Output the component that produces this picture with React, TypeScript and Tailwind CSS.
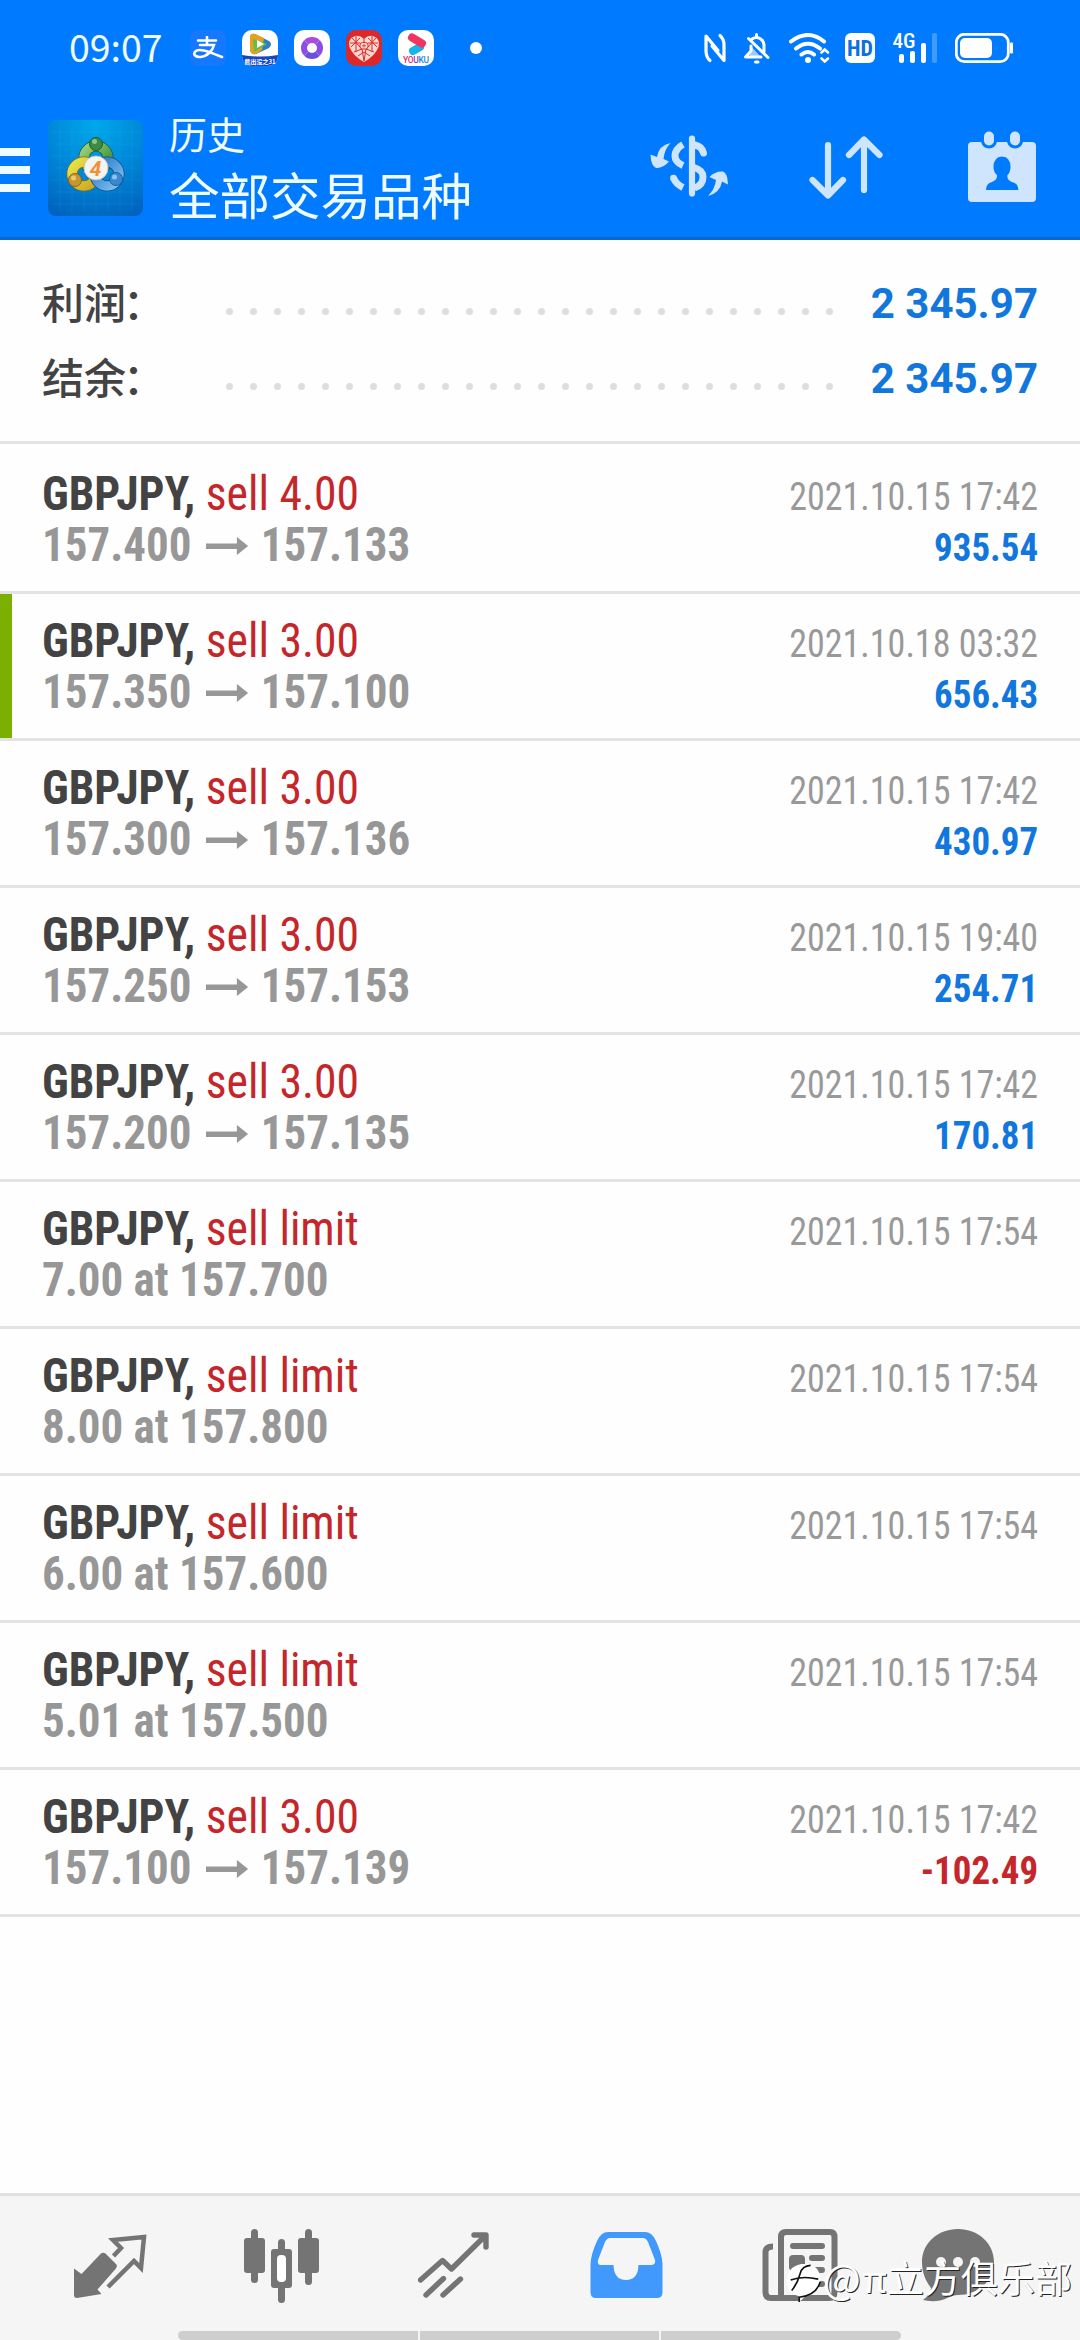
type Deal = {
  kind: string;
  from?: string;
  to?: string;
  detail?: string;
  time: string;
  profit?: string;
  loss?: boolean;
  marked?: boolean;
};

const deals: Deal[] = [
  { kind: 'sell 4.00', from: '157.400', to: '157.133', time: '2021.10.15 17:42', profit: '935.54' },
  { kind: 'sell 3.00', from: '157.350', to: '157.100', time: '2021.10.18 03:32', profit: '656.43', marked: true },
  { kind: 'sell 3.00', from: '157.300', to: '157.136', time: '2021.10.15 17:42', profit: '430.97' },
  { kind: 'sell 3.00', from: '157.250', to: '157.153', time: '2021.10.15 19:40', profit: '254.71' },
  { kind: 'sell 3.00', from: '157.200', to: '157.135', time: '2021.10.15 17:42', profit: '170.81' },
  { kind: 'sell limit', detail: '7.00 at 157.700', time: '2021.10.15 17:54' },
  { kind: 'sell limit', detail: '8.00 at 157.800', time: '2021.10.15 17:54' },
  { kind: 'sell limit', detail: '6.00 at 157.600', time: '2021.10.15 17:54' },
  { kind: 'sell limit', detail: '5.01 at 157.500', time: '2021.10.15 17:54' },
  { kind: 'sell 3.00', from: '157.100', to: '157.139', time: '2021.10.15 17:42', profit: '-102.49', loss: true },
];

function AppBadges() {
  return (
    <div className="flex items-center gap-[16px]">
      <div className="flex h-9 w-9 items-center justify-center rounded-lg bg-[#1677ff]">
        <svg width="32" height="24" viewBox="0 0 32 24" fill="none" stroke="#fff" strokeWidth="2.6" strokeLinecap="round">
          <path d="M6 4.5H24M15 1V9M8 9H22C20.5 15 15 20.500 8.500 21C3.500 21.300 1 18.500 3 15.800C6.500 11.500 15 15 30 21" />
        </svg>
      </div>
      <svg width="36" height="36" viewBox="0 0 36 36">
        <defs><clipPath id="tv"><rect width="36" height="36" rx="10" /></clipPath></defs>
        <g clipPath="url(#tv)">
          <rect width="36" height="36" fill="#fff" />
          <path d="M8 8Q8 3 13 4L27 11Q31 14 27 18L14 24Q9 25 8 20Z" fill="#2f80c0" />
          <path d="M8 8Q8 3 13 4L22 8 20 20 14 24Q9 25 8 20Z" fill="#e8a020" />
          <path d="M11 9 25 14 12 22Z" fill="#5cc04a" />
          <path d="M15 10 22 14 15 18Z" fill="#fff" />
          <path d="M0 25Q18 28 36 25V36H0Z" fill="#1347c0" />
        </g>
        <text x="18" y="33.500" textAnchor="middle" fill="#fff" fontSize="6" fontWeight="700" fontFamily="Noto Sans CJK SC, sans-serif">熊出没之31</text>
      </svg>
      <div className="flex h-9 w-9 items-center justify-center rounded-[10px] bg-white">
        <div className="h-[22px] w-[22px] rounded-full border-[6px] border-t-[#a84be0] border-r-[#8a4fe0] border-b-[#6a50dc] border-l-[#8a4fe0]" />
      </div>
      <svg width="36" height="36" viewBox="0 0 36 36">
        <rect width="36" height="36" rx="10" fill="#dc2828" />
        <path d="M18 9Q22 5 27 6Q35 9 32.500 17Q29 26 18 32Q7 26 3.500 17Q1 9 9 6Q14 5 18 9Z" fill="#f9d8d0" />
        <path d="M6 8 14 17M14 8 5 17M30 8 22 17M22 8 31 17M8 22 16 19 18 31M28 22 20 19 18 31M12 26 18 22 24 26M10 6V22M26 6V22M4 13H14M22 13H32M18 9V13" fill="none" stroke="#dc2828" strokeWidth="1" />
        <rect x="14" y="12.500" width="8" height="6.500" rx="2.500" fill="#f9d8d0" stroke="#dc2828" />
        <path d="M16 15.800H20M18 14V17.500" stroke="#dc2828" strokeWidth=".8" />
      </svg>
      <svg width="36" height="36" viewBox="0 0 36 36">
        <rect width="36" height="36" rx="10" fill="#fff" />
        <path d="M15 21 22 17" stroke="#19b3ea" strokeWidth="8" strokeLinecap="round" />
        <path d="M14 7.500 24 13.500" stroke="#f0355f" strokeWidth="8" strokeLinecap="round" />
        <text x="5" y="33" fontSize="8.5" textLength="26" fontFamily="Roboto, sans-serif" fontWeight="500"><tspan fill="#e02a6a">YO</tspan><tspan fill="#8040b0">U</tspan><tspan fill="#1c8ad8">KU</tspan></text>
      </svg>
    </div>
  );
}

function StatusBar() {
  return (
    <div className="flex h-[96px] items-center pl-[69px]">
      <div className="mb-[5px] w-[121px] font-['Noto_Sans_CJK_SC','Roboto',sans-serif] text-[37.500px] leading-none">09:07</div>
      <AppBadges />
      <div className="ml-[36px] h-3 w-3 rounded-full bg-white" />
      <div className="ml-[222px] flex items-center">
        <svg width="22" height="30" viewBox="702 33 22 30" fill="none" stroke="#fff" strokeWidth="3.2" strokeLinejoin="round" strokeLinecap="round">
          <path d="M708 60.500Q704 57 704 51V36L716 50.500M718 35.500Q722 39 722 45V60.500L710 46" />
        </svg>
        <svg className="ml-[17px]" width="27" height="31" viewBox="741 32 27 31" fill="none" stroke="#fff" strokeWidth="3" strokeLinecap="round" strokeLinejoin="round">
          <path d="M754.500 33.500V36M750 38Q754 35.500 758 37.500Q762 40 762 45V51M746.500 37.500 766 56.500M749 45V50L743.500 56H759M753.500 61H756" />
          <path d="M748 44 758 55H748Z" fill="#fff" stroke="none" opacity=".6" />
        </svg>
        <svg className="ml-[19px]" width="41" height="31" viewBox="787 33 41 31" fill="none" stroke="#fff" strokeWidth="4" strokeLinecap="round">
          <path d="M789 41.500Q806 28.500 822 41.500M794 48.500Q806 39 818 48.500M799.500 54.500Q806 49.500 812 54.500" />
          <circle cx="806" cy="60" r="3" fill="#fff" stroke="none" />
          <path d="M819.500 52.500 822.700 49.500 826 52.500M819.500 58.500 822.700 61.500 826 58.500" strokeWidth="2.600" />
        </svg>
        <div className="ml-[15px] flex h-[30px] w-[30px] items-center justify-center rounded-[6px] bg-white font-['Roboto_Condensed','Roboto',sans-serif] text-[22px] font-bold text-[#0d6fe0]">HD</div>
        <svg className="ml-[18px] overflow-visible" width="44" height="31" viewBox="891 33 44 31">
          <text x="890.500" y="48" fontSize="20" fontWeight="500" fill="#fff" textLength="23" lengthAdjust="spacingAndGlyphs" fontFamily="Roboto Condensed, Roboto, sans-serif">4G</text>
          <rect x="897" y="54" width="5" height="9" rx="2" fill="#fff" />
          <rect x="908" y="51" width="5" height="12" rx="2" fill="#fff" />
          <rect x="919" y="43" width="5" height="20" rx="2" fill="#fff" />
          <rect x="930" y="33" width="5" height="30" rx="2" fill="#fff" opacity=".25" />
        </svg>
        <svg className="ml-[18px]" width="59" height="31" viewBox="953 33 59 31">
          <rect x="954.300" y="34.300" width="52" height="27.400" rx="8" fill="none" stroke="#fff" strokeWidth="2.800" />
          <rect x="958" y="38" width="32" height="20" rx="5" fill="#fff" />
          <rect x="1008" y="42.500" width="3" height="11" rx="1" fill="#fff" />
        </svg>
      </div>
    </div>
  );
}

function Logo() {
  return (
    <svg className="ml-[18px] shrink-0" width="95" height="96" viewBox="0 0 95 96">
      <defs>
        <radialGradient id="bg" cx=".5" cy=".05" r="1"><stop offset="0" stopColor="#00a8ea" /><stop offset=".5" stopColor="#0088d8" /><stop offset="1" stopColor="#0064be" /></radialGradient>
        <linearGradient id="gr" x1="0" y1="0" x2="1" y2="1"><stop offset="0" stopColor="#9fcf7a" /><stop offset="1" stopColor="#2f8a2f" /></linearGradient>
        <linearGradient id="ye" x1="0" y1="0" x2="1" y2="1"><stop offset="0" stopColor="#e8e24a" /><stop offset="1" stopColor="#c9a820" /></linearGradient>
        <linearGradient id="bl" x1="0" y1="0" x2="1" y2="1"><stop offset="0" stopColor="#2a78c8" /><stop offset="1" stopColor="#7cc0ee" /></linearGradient>
      </defs>
      <rect width="95" height="96" rx="8" fill="url(#bg)" />
      <path d="M12 4V92M24 4V92M36 4V92M48 4V92M60 4V92M72 4V92M84 4V92M4 12H91M4 24H91M4 36H91M4 48H91M4 60H91M4 72H91M4 84H91" stroke="#4cc0f4" strokeOpacity=".12" />
      <g fill="none">
        <circle cx="48" cy="38" r="12" stroke="#1d5a3a" strokeWidth="11" />
        <circle cx="48" cy="38" r="12" stroke="url(#gr)" strokeWidth="9.500" />
        <circle cx="36" cy="54" r="12" stroke="#7a6a18" strokeWidth="11" />
        <circle cx="36" cy="54" r="12" stroke="url(#ye)" strokeWidth="9.500" />
        <circle cx="59" cy="54" r="12" stroke="#144a88" strokeWidth="11" />
        <circle cx="59" cy="54" r="12" stroke="url(#bl)" strokeWidth="9.500" />
      </g>
      <circle cx="48" cy="24" r="6.500" fill="#3d8a44" stroke="#1f5c38" />
      <circle cx="46.500" cy="21.500" r="2.500" fill="#8fc48a" />
      <circle cx="27" cy="60" r="6.500" fill="#c8962c" stroke="#86641c" />
      <circle cx="25.500" cy="58" r="2.500" fill="#ecc878" />
      <circle cx="68" cy="59" r="6.500" fill="#3a88d0" stroke="#1d5c9c" />
      <circle cx="66.500" cy="57" r="2.500" fill="#8cc4f0" />
      <circle cx="48" cy="48" r="12" fill="#f4f4f0" stroke="#c8c8b8" />
      <text x="47.500" y="55.500" textAnchor="middle" fontSize="21" fontStyle="italic" fontWeight="700" fill="#f09038" fontFamily="Roboto, sans-serif">4</text>
    </svg>
  );
}

function Header() {
  return (
    <header className="h-[240px] border-b-[3px] border-[#0868cc] bg-[#007aff] text-[#eefbff]">
      <StatusBar />
      <div className="flex h-[144px] items-start pt-6">
        <div className="mt-7 flex w-[30px] flex-col gap-[10px]">
          <div className="h-2 bg-[#eefbff]" />
          <div className="h-2 bg-[#eefbff]" />
          <div className="h-2 bg-[#eefbff]" />
        </div>
        <Logo />
        <div className="-mt-[10px] ml-[26px] font-['Noto_Sans_CJK_SC',sans-serif]">
          <div className="text-[38px] leading-[46px]">历史</div>
          <div className="mt-[4px] text-[50.500px] leading-[66px]">全部交易品种</div>
        </div>
        <svg className="mt-[15px] ml-auto" width="79" height="62" viewBox="651 135 79 62" fill="none" stroke="#cfe5fd" strokeWidth="6">
          <path d="M693 138.500V193.500" strokeLinecap="round" strokeWidth="6.200" />
          <path d="M684 144.500Q676 149 676 156Q676 162 684 165.500" strokeWidth="7" />
          <path d="M696 145Q703 146.500 704.500 153" strokeLinecap="round" strokeWidth="7" />
          <path d="M684 187.500Q677 184 674.500 178" strokeWidth="7" />
          <path d="M695 167.500Q704 170 704 177Q704 185 695.500 188" strokeWidth="7" />
          <circle cx="674.500" cy="178" r="3.300" fill="#cfe5fd" stroke="none" />
          <path d="M671.500 143Q660 145 658 157L651.500 154.500Q652 166 657 168Q664 168.500 670 161.500L664.500 159Q665.500 149 671.500 143Z" fill="#cfe5fd" stroke="none" />
          <path d="M709 196Q721 193 723 181.500L729 184.500Q728.500 173 724 171.500Q716 171 710.500 177L717 180Q716 189 709 196Z" fill="#cfe5fd" stroke="none" />
        </svg>
        <svg className="mt-[15px] ml-[79px]" width="76" height="66" viewBox="808 135 76 66" fill="none" stroke="#cfe5fd" strokeWidth="6.200" strokeLinecap="round" strokeLinejoin="round">
          <path d="M828 145V195M812.500 180 828 195.500 843 180M864 190V139.500M849 155 864 139.500 879.500 155" />
        </svg>
        <svg className="mt-[11px] mr-[44px] ml-[84px]" width="68" height="72" viewBox="968 131 68 72">
          <path d="M972 142H981Q983 148.500 989 148.500Q995 148.500 997 142H1007Q1009 148.500 1015 148.500Q1021 148.500 1023 142H1032Q1036 142 1036 146V198Q1036 202 1032 202H972Q968 202 968 198V146Q968 142 972 142Z" fill="#cfe5fd" />
          <rect x="984" y="131.500" width="10" height="14" rx="5" fill="#cfe5fd" />
          <rect x="1010" y="131.500" width="10" height="14" rx="5" fill="#cfe5fd" />
          <path d="M1002 156.500Q1010.500 157 1010.500 167Q1010.500 172 1007.500 175Q1006.500 180 1012 182Q1018.500 183.500 1018.500 190H986Q986 183.500 992 182Q997.500 180 997 175Q993.500 172 993.500 167Q993.500 157 1002 156.500Z" fill="#007aff" />
        </svg>
      </div>
    </header>
  );
}

function SummaryRow({ label, value }: { label: string; value: string }) {
  return (
    <div className="flex h-[75px] items-center">
      <div className="mb-[7px] w-[184px] font-['Noto_Sans_CJK_SC',sans-serif] text-[42px] font-medium text-[#434343]">
        {label}<span className="-ml-[3px]">：</span>
      </div>
      <div className="mt-[15px] flex w-[607px] justify-between">
        {Array.from({ length: 26 }, (_, i) => (
          <div key={i} className="h-[7px] w-[7px] rounded-full bg-[#dedede]" />
        ))}
      </div>
      <div className="ml-auto font-['Roboto',sans-serif] text-[42px] font-bold text-[#1177dd]">{value}</div>
    </div>
  );
}

function DealRow({ deal }: { deal: Deal }) {
  return (
    <div className="relative flex h-[147px] justify-between border-b-[3px] border-[#e3e3e3] pt-[21px] pr-[42px] pl-[42px] font-['Roboto_Condensed','Roboto',sans-serif]">
      {deal.marked && <div className="absolute top-0 left-0 h-full w-3 bg-[#7cb000]" />}
      <div className="text-[48px] leading-[51px] whitespace-nowrap">
        <div className="origin-left scale-x-[.951] text-[#c4262a]">
          <span className="font-bold text-[#434343]">GBPJPY,</span> {deal.kind}
        </div>
        <div className="flex origin-left scale-x-[.937] items-center font-bold text-[#979797]">
          {deal.detail ?? (
            <>
              {deal.from}
              <svg className="mr-[14px] ml-[15px] mt-[2px]" width="45" height="18" viewBox="0 0 45 18">
                <path d="M0 6.500H33V0L45 9 33 18V12H0Z" fill="#979797" />
              </svg>
              {deal.to}
            </>
          )}
        </div>
      </div>
      <div className="pt-[3px] text-right text-[39.500px] leading-[51px]">
        <div className="origin-right scale-x-[.911] text-[#999]">{deal.time}</div>
        <div className={deal.loss ? 'origin-right scale-x-[.935] font-bold text-[#c4262a]' : 'origin-right scale-x-[.935] font-bold text-[#1177dd]'}>{deal.profit}</div>
      </div>
    </div>
  );
}

function BottomBar() {
  return (
    <nav className="h-[147px] border-t-[3px] border-[#e0e0e0] bg-[#f5f5f5]">
      <div className="flex h-[135px] items-start px-[74px] pt-[33px] text-[#747474]">
        <svg width="73" height="74" viewBox="74 2229 73 74" fill="currentColor">
          <path d="M74 2268.500 81.500 2274 101 2253.500Q103.500 2252 106 2254L116.500 2264.500Q117.500 2267 115.500 2269L97.500 2289.500 101.500 2294 77 2298Q74 2298 74 2295Z" />
          <path d="M113.500 2256 121 2248 113 2240 144 2237 141 2268 134 2261 108 2287" fill="none" stroke="currentColor" strokeWidth="4.500" />
        </svg>
        <svg className="ml-[97px]" width="76" height="75" viewBox="244 2229 76 75" fill="currentColor">
          <rect x="244" y="2238" width="21" height="35" rx="3" /><rect x="251" y="2229" width="7" height="54" rx="3.500" />
          <rect x="298" y="2238" width="21" height="35" rx="3" /><rect x="305" y="2229" width="7" height="56" rx="3.500" />
          <rect x="278" y="2239" width="7" height="64" rx="3.500" />
          <rect x="271" y="2249" width="21" height="39" rx="3" /><rect x="277" y="2255" width="9" height="27" rx="4" fill="#fff" />
        </svg>
        <svg className="ml-[98px]" width="72" height="74" viewBox="418 2229 72 74" fill="none" stroke="currentColor" strokeWidth="5.400" strokeLinecap="round" strokeLinejoin="round">
          <path d="M420.500 2280 442.500 2260.500 451.500 2269 485 2236M474 2235H486V2247M426 2295 443.500 2278.500M443 2295 460.500 2279" />
        </svg>
        <svg className="ml-[100px]" width="73" height="74" viewBox="590 2229 73 74">
          <path fillRule="evenodd" d="M608 2232H645Q652 2232 656 2241Q662 2254 662.500 2264V2292Q662.500 2298 657 2298H596Q590.500 2298 590.500 2292V2264Q591 2254 597 2241Q601 2232 608 2232ZM610 2238Q607 2238 605 2242L598 2260Q597 2265 601 2265H613.500Q614 2280 626 2280Q638 2280 638.500 2265H651Q656 2265 655 2260L648 2242Q646 2238 643 2238Z" fill="#4199fd" />
        </svg>
        <svg className="ml-[99px]" width="76" height="74" viewBox="762 2229 76 74" fill="none" stroke="currentColor" strokeWidth="6">
          <path d="M773 2246.500Q765.500 2246.500 765.500 2252V2292Q765.500 2298 771 2298H829Q834.500 2298 834.500 2292V2237Q834.500 2232 830 2232H786Q781 2232 781 2237V2298" />
          <path d="M793 2246H822M812 2258H822M812 2270H822M793 2284H822" strokeLinecap="round" />
          <rect x="792" y="2258" width="10" height="10" rx="1" fill="currentColor" />
        </svg>
        <svg className="ml-[84px]" width="73" height="74" viewBox="922 2229 73 74">
          <path d="M958 2229C978 2229 994 2243 994 2262C994 2281 978 2295 958 2295C950 2295 948 2299 940 2300.500Q931 2302 923 2300Q931 2294 931 2288C925 2280 922 2272 922 2262C922 2243 938 2229 958 2229Z" fill="currentColor" />
          <circle cx="941" cy="2262" r="5" fill="#f5f5f5" /><circle cx="958" cy="2262" r="5" fill="#f5f5f5" /><circle cx="975" cy="2262" r="5" fill="#f5f5f5" />
        </svg>
      </div>
      <div className="ml-[178px] flex h-[9px] w-[723px] gap-[2px] overflow-hidden rounded-l-full rounded-r-full">
        <div className="flex-1 bg-[#cecece]" />
        <div className="flex-1 bg-[#cecece]" />
        <div className="flex-1 bg-[#cecece]" />
      </div>
    </nav>
  );
}

function Watermark() {
  return (
    <div className="absolute right-[8px] bottom-[37px] flex items-end">
      <svg width="38" height="42" viewBox="0 0 40 44">
        <path d="M17 3Q37 2 37 19Q37 32 23 36L15 43V37Q2 34 2 21Q2 6 17 3Z" fill="#fff" />
        <path d="M7 31Q13 24 16 13Q18 5 27 4.500M6 20Q18 15 35 19M15 43V38Q33 36 37 22" fill="none" stroke="#111" strokeWidth="1.700" />
      </svg>
      <div className="mb-[4px] flex items-center font-['Noto_Sans_CJK_SC',sans-serif] text-[37px] leading-[44px] whitespace-nowrap text-white [text-shadow:1px_1px_0_#222]">
        <span className="mr-[2px] text-[40px]">@</span>π立方俱乐部
      </div>
    </div>
  );
}

export default function App() {
  return (
    <div className="relative flex h-[2340px] w-[1080px] flex-col overflow-hidden bg-[#fefefe]">
      <Header />
      <section className="h-[204px] border-b-[3px] border-[#e3e3e3] pt-[26px] pr-[42px] pl-[42px]">
        <SummaryRow label="利润" value="2 345.97" />
        <SummaryRow label="结余" value="2 345.97" />
      </section>
      <main className="flex-1 pt-[3px]">
        {deals.map((deal, i) => (
          <DealRow key={i} deal={deal} />
        ))}
      </main>
      <BottomBar />
      <Watermark />
    </div>
  );
}
